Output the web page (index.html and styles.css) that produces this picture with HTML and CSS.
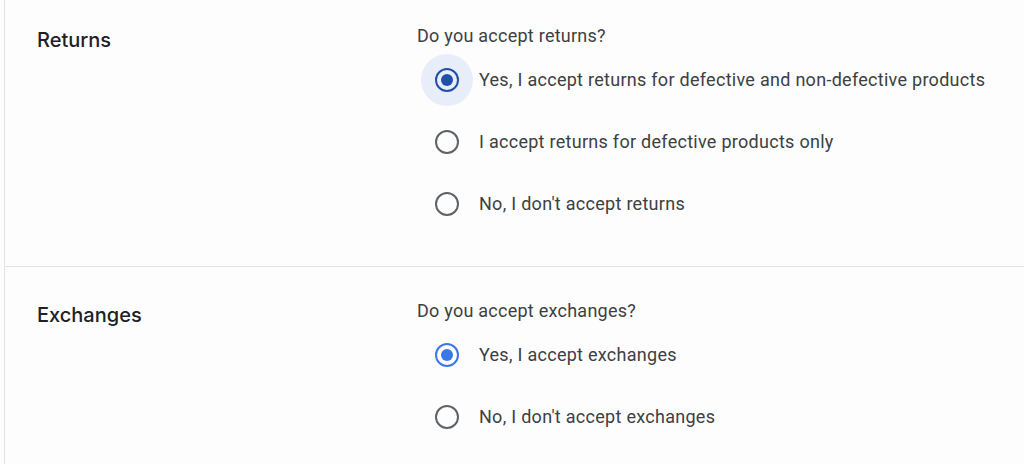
FILE: index.html
```html
<!DOCTYPE html>
<html lang="en">
<head>
<meta charset="utf-8">
<title>Returns and exchanges</title>
<link rel="stylesheet" href="styles.css">
</head>
<body>
<div class="panel">
  <section class="section">
    <h2 class="section-title">Returns</h2>
    <div class="field">
      <p class="question">Do you accept returns?</p>
      <div class="options">
        <label class="option">
          <span class="radio-wrap focused"><span class="radio checked dark"></span></span>
          <span class="option-label">Yes, I accept returns for defective and non-defective products</span>
        </label>
        <label class="option">
          <span class="radio-wrap"><span class="radio"></span></span>
          <span class="option-label">I accept returns for defective products only</span>
        </label>
        <label class="option">
          <span class="radio-wrap"><span class="radio"></span></span>
          <span class="option-label">No, I don't accept returns</span>
        </label>
      </div>
    </div>
  </section>
  <section class="section">
    <h2 class="section-title">Exchanges</h2>
    <div class="field">
      <p class="question">Do you accept exchanges?</p>
      <div class="options">
        <label class="option">
          <span class="radio-wrap"><span class="radio checked"></span></span>
          <span class="option-label">Yes, I accept exchanges</span>
        </label>
        <label class="option">
          <span class="radio-wrap"><span class="radio"></span></span>
          <span class="option-label">No, I don't accept exchanges</span>
        </label>
      </div>
    </div>
  </section>
</div>
</body>
</html>
```

FILE: styles.css
```css
html, body {
  margin: 0;
  padding: 0;
  background: #fdfdfd;
}

body {
  font-family: Roboto, "Liberation Sans", Arial, sans-serif;
  color: #3c4043;
  overflow: hidden;
}

.panel {
  margin-left: 4px;
  margin-top: -8px;
  border-left: 1px solid #e3e3e3;
  min-height: 480px;
}

.section {
  display: grid;
  grid-template-columns: 380px 1fr;
  padding: 32px 0 36px 32px;
  border-bottom: 1px solid #e3e3e3;
}

.section:last-child {
  border-bottom: none;
}

.section-title {
  margin: 0;
  padding-top: 4px;
  font-family: Inter, Roboto, sans-serif;
  font-size: 20px;
  font-weight: 500;
  line-height: 24px;
  color: #202124;
}

.question {
  margin: 0;
  font-size: 18px;
  line-height: 24px;
  letter-spacing: 0.25px;
  color: #3c4043;
}

.options {
  display: flex;
  flex-direction: column;
  gap: 10px;
  margin-top: 6px;
  padding-left: 4px;
}

.option {
  display: flex;
  align-items: center;
  gap: 6px;
  height: 52px;
}

.radio-wrap {
  width: 52px;
  height: 52px;
  border-radius: 50%;
  display: flex;
  align-items: center;
  justify-content: center;
  flex: none;
}

.radio-wrap.focused {
  background: #e8eef9;
}

.radio {
  width: 24px;
  height: 24px;
  box-sizing: border-box;
  border: 2.5px solid #5f6368;
  border-radius: 50%;
  display: flex;
  align-items: center;
  justify-content: center;
}

.radio.checked {
  border-color: #3b78e7;
}

.radio.checked::after {
  content: "";
  width: 12px;
  height: 12px;
  border-radius: 50%;
  background: #3b78e7;
}

.radio.checked.dark {
  border-color: #2150a8;
}

.radio.checked.dark::after {
  background: #2150a8;
}

.option-label {
  font-size: 18px;
  line-height: 24px;
  color: #3c4043;
  letter-spacing: 0.28px;
}
```
